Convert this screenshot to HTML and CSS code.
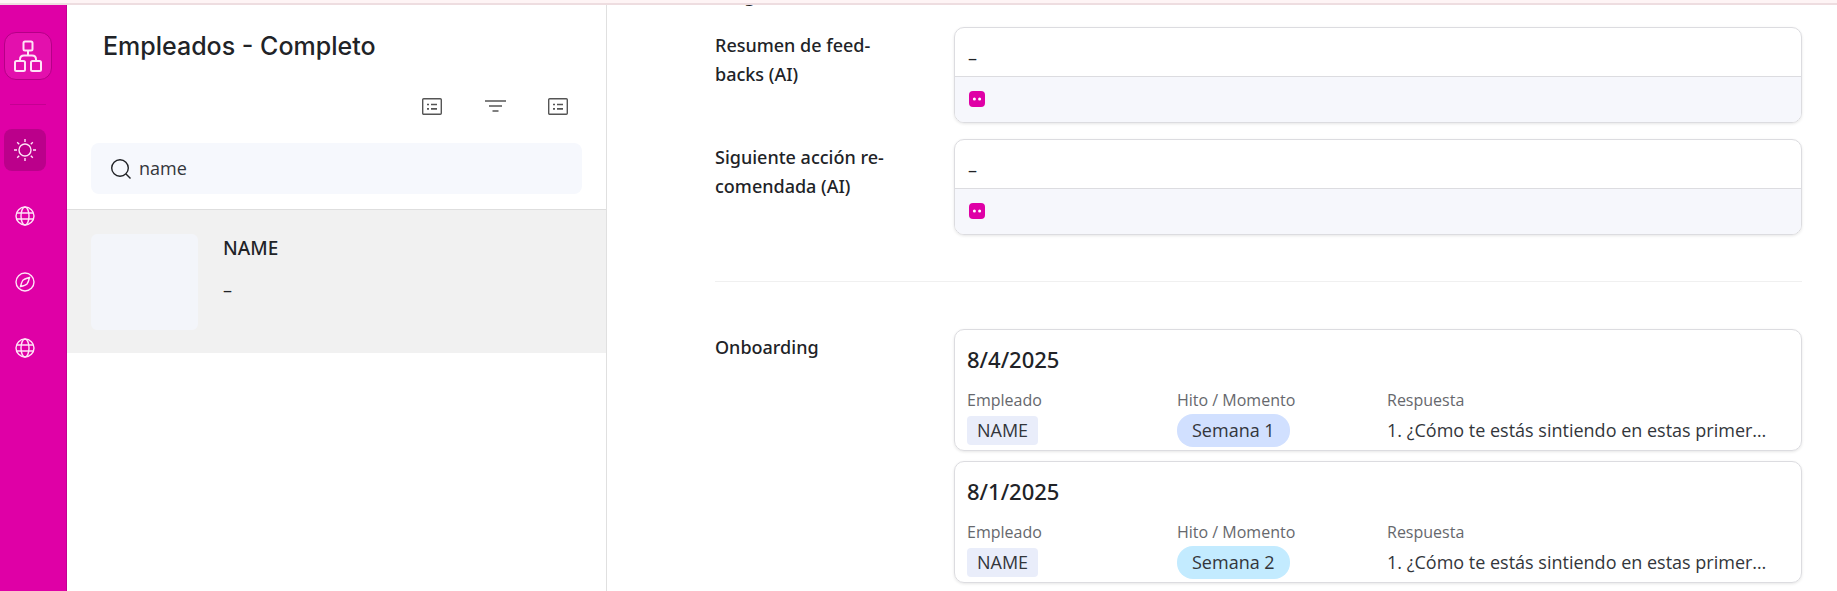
FILE: index.html
```html
<!DOCTYPE html>
<html lang="es">
<head>
    <meta charset="UTF-8">
    <title>Empleados - Completo</title>
    <link rel="stylesheet" href="styles.css">
</head>
<body>

<svg width="0" height="0" class="sprite">
    <symbol id="globe" viewBox="0 0 20 20">
        <circle cx="10" cy="10" r="9"/>
        <ellipse cx="10" cy="10" rx="4" ry="9"/>
        <path d="M2 7h16M2 13h16"/>
    </symbol>
    <symbol id="list" viewBox="0 0 20 17">
        <rect x="0.7" y="0.7" width="18.6" height="15.6" rx="1"/>
        <path d="M5 6.5h2M9 6.5h6M5 10.8h2M9 10.8h6" stroke-width="1.7"/>
    </symbol>
    <symbol id="bot" viewBox="0 0 16 16">
        <rect width="16" height="16" rx="4" fill="#df00a6"/>
        <circle cx="5.4" cy="8" r="1.5" fill="#fff"/>
        <circle cx="10.6" cy="8" r="1.5" fill="#fff"/>
    </symbol>
</svg>

<div class="topline"></div>
<div class="app">

    <nav class="sidebar">
        <a href="#" class="logo" aria-label="Inicio">
            <svg width="28" height="32" viewBox="0 0 28 32">
                <rect x="9.5" y="1.5" width="9" height="9" rx="1.5"/>
                <rect x="1" y="21" width="10" height="10" rx="1.5"/>
                <rect x="17" y="21" width="10" height="10" rx="1.5"/>
                <path d="M14 10.5v5M6 21v-1.5q0-4 4-4h8q4 0 4 4V21"/>
            </svg>
        </a>
        <hr>
        <a href="#" class="nav-item active" aria-label="Empleados">
            <svg width="22" height="22" viewBox="0 0 22 22">
                <circle cx="11" cy="11" r="6"/>
                <path d="M11 0v3M11 19v3M0 11h3M19 11h3M3.2 3.2l2 2M16.8 16.8l2 2M3.2 18.8l2-2M16.8 5.2l2-2"/>
            </svg>
        </a>
        <a href="#" class="nav-item" aria-label="Web"><svg width="20" height="20"><use href="#globe"/></svg></a>
        <a href="#" class="nav-item" aria-label="Explorar">
            <svg width="20" height="20" viewBox="0 0 20 20">
                <circle cx="10" cy="10" r="9"/>
                <path d="M14.5 5.5Q9 7 7.700 8.500Q6.500 10.500 5.500 14.500Q10.500 13.500 12 12Q13.500 10 14.500 5.500z"/>
            </svg>
        </a>
        <a href="#" class="nav-item" aria-label="Sitio"><svg width="20" height="20"><use href="#globe"/></svg></a>
    </nav>

    <section class="list">
        <h1>Empleados - Completo</h1>
        <div class="tools">
            <button type="button" aria-label="Vista"><svg width="20" height="17"><use href="#list"/></svg></button>
            <button type="button" aria-label="Filtrar">
                <svg width="21" height="12" viewBox="0 0 21 12"><path d="M0 1h21M4 6h13M7.500 11h6"/></svg>
            </button>
            <button type="button" aria-label="Campos"><svg width="20" height="17"><use href="#list"/></svg></button>
        </div>
        <label class="search">
            <svg width="20" height="20" viewBox="0 0 20 20"><circle cx="9" cy="9" r="8.300"/><path d="M15 15l4.500 4.500"/></svg>
            <input type="text" value="name" aria-label="Buscar">
        </label>
        <a href="#" class="record">
            <span class="thumb"></span>
            <span class="record-text">
                <span class="record-name">NAME</span>
                <span>–</span>
            </span>
        </a>
    </section>

    <main class="detail">
        <div class="row scrolled">
            <div class="label">Cargo</div>
        </div>
        <div class="row">
            <div class="label">Resumen de feed&shy;backs (AI)</div>
            <div class="card">
                <div class="value">–</div>
                <div class="ai"><svg width="16" height="16"><use href="#bot"/></svg></div>
            </div>
        </div>
        <div class="row">
            <div class="label">Siguiente acción re&shy;comendada (AI)</div>
            <div class="card">
                <div class="value">–</div>
                <div class="ai"><svg width="16" height="16"><use href="#bot"/></svg></div>
            </div>
        </div>
        <hr>
        <div class="row">
            <div class="label">Onboarding</div>
            <div class="cards">
                <div class="card entry">
                    <h2>8/4/2025</h2>
                    <div class="fields">
                        <div><div class="field-name">Empleado</div><span class="tag">NAME</span></div>
                        <div><div class="field-name">Hito / Momento</div><span class="pill">Semana 1</span></div>
                        <div><div class="field-name">Respuesta</div><span class="answer">1. ¿Cómo te estás sintiendo en estas primer…</span></div>
                    </div>
                </div>
                <div class="card entry">
                    <h2>8/1/2025</h2>
                    <div class="fields">
                        <div><div class="field-name">Empleado</div><span class="tag">NAME</span></div>
                        <div><div class="field-name">Hito / Momento</div><span class="pill cyan">Semana 2</span></div>
                        <div><div class="field-name">Respuesta</div><span class="answer">1. ¿Cómo te estás sintiendo en estas primer…</span></div>
                    </div>
                </div>
            </div>
        </div>
    </main>

</div>
</body>
</html>
```
FILE: styles.css
```css
* {
    box-sizing: border-box;
}

body {
    margin: 0;
    height: 100vh;
    display: flex;
    flex-direction: column;
    overflow: hidden;
    background: #fff;
    color: #212327;
    font-family: "Open Sans", "Noto Sans", sans-serif;
    font-size: 18px;
    line-height: 29px;
}

svg {
    display: block;
    flex: none;
    fill: none;
    stroke-width: 1.4;
}

a {
    color: inherit;
    text-decoration: none;
}

.sprite {
    position: absolute;
}

.topline {
    flex: none;
    height: 5px;
    background: #fef4f5;
    border-bottom: 2px solid #eedde0;
}

.app {
    flex: 1;
    min-height: 0;
    display: flex;
}

/* sidebar */

.sidebar {
    flex: none;
    width: 67px;
    padding: 27px 4px;
    background: #df00a6;
    border-right: 1px solid #c50092;
}

.sidebar svg {
    stroke: #ffe3f7;
}

.logo {
    display: flex;
    align-items: center;
    justify-content: center;
    width: 48px;
    height: 48px;
    border: 1px solid #b50087;
    border-radius: 12px;
    background: #e310ad;
}

.logo svg {
    stroke-width: 2;
}

.sidebar hr {
    width: 36px;
    margin: 24px 0 24px 6px;
    border: 0;
    border-top: 1px solid #c50092;
}

.nav-item {
    display: flex;
    align-items: center;
    justify-content: center;
    width: 42px;
    height: 42px;
    margin-bottom: 24px;
    border-radius: 8px;
}

.active {
    background: #bb008b;
}

/* list of records */

.list {
    flex: none;
    width: 540px;
    border-right: 1px solid #e0e0e0;
}

h1 {
    margin: 24px 36px 0;
    font-family: Inter, sans-serif;
    font-size: 25px;
    font-weight: 500;
    line-height: 34px;
}

.tools {
    display: flex;
    justify-content: flex-end;
    gap: 31px;
    padding: 27px 32px 21px 0;
}

.tools button {
    display: flex;
    align-items: center;
    justify-content: center;
    width: 32px;
    height: 32px;
    padding: 0;
    border: 0;
    background: none;
    stroke: #555;
}

.search {
    display: flex;
    align-items: center;
    gap: 8px;
    height: 51px;
    margin: 0 24px 15px;
    padding: 0 20px;
    border-radius: 8px;
    background: #f6f8fd;
    stroke: #212327;
}

.search input {
    flex: 1;
    min-width: 0;
    padding: 0;
    border: 0;
    outline: 0;
    background: none;
    color: #33363b;
    font: inherit;
}

.record {
    display: flex;
    gap: 25px;
    padding: 24px 24px 23px;
    border-top: 1px solid #dedede;
    background: #f1f1f1;
}

.thumb {
    width: 107px;
    height: 96px;
    border-radius: 6px;
    background: #f3f5fa;
}

.record-text {
    display: flex;
    flex-direction: column;
    gap: 13px;
}

.record-name,
.label,
h2 {
    font-family: "Noto Sans", sans-serif;
    font-weight: 500;
}

.record-name {
    font-size: 19px;
}

/* record detail */

.detail {
    flex: 1;
    min-width: 0;
    overflow: hidden;
    padding: 0 35px 0 108px;
}

.row {
    display: flex;
    margin-bottom: 16px;
}

.scrolled {
    margin: -24px 0 17px;
}

.label {
    flex: none;
    width: 185px;
    margin-right: 54px;
}

.row + .row .label,
hr + .row .label {
    padding-top: 4px;
}

.detail hr {
    margin: 46px 0 47px;
    border: 0;
    border-top: 1px solid #f0f0f0;
}

.card {
    flex: 1;
    min-width: 0;
    overflow: hidden;
    border: 1px solid #dcdce0;
    border-radius: 10px;
    box-shadow: 0 1px 3px rgba(0, 0, 0, 0.1);
}

.value {
    height: 49px;
    padding: 16px 13px 0;
    border-bottom: 1px solid #dcdce0;
}

.ai {
    padding: 14px 14px 15px;
    background: #f6f7fc;
}

.cards {
    flex: 1;
    min-width: 0;
    display: flex;
    flex-direction: column;
    gap: 10px;
}

.entry {
    padding: 14px 12px 3px;
}

h2 {
    margin: 0 0 13px;
    font-size: 22px;
    line-height: 30px;
}

.fields {
    display: grid;
    grid-template-columns: 210px 210px 1fr;
}

.field-name {
    color: #66686d;
    font-size: 16px;
    line-height: 27px;
}

.tag,
.pill {
    display: block;
    width: fit-content;
    color: #33363b;
}

.tag {
    margin-top: 2px;
    padding: 0 10px;
    border-radius: 4px;
    background: #e9edfa;
}

.pill {
    padding: 2px 15px;
    border-radius: 16px;
    background: #d1e0ff;
}

.cyan {
    background: #c3ebff;
}

.answer {
    display: block;
    padding-top: 2px;
    overflow: hidden;
    white-space: nowrap;
    text-overflow: ellipsis;
    color: #33363b;
}
```
